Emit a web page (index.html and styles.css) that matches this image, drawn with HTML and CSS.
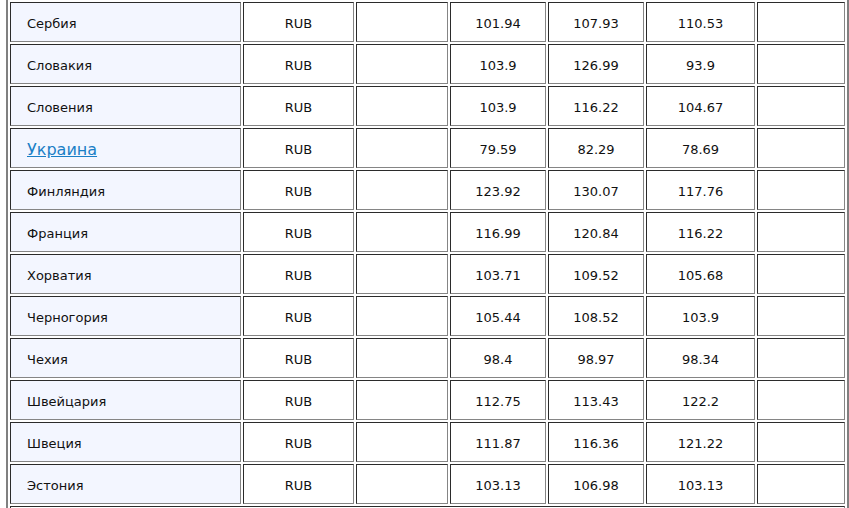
FILE: index.html
```html
<!DOCTYPE html>
<html lang="ru">
<head>
<meta charset="utf-8">
<title>Цены</title>
<link rel="stylesheet" href="styles.css">
</head>
<body>
<table class="prices">
  <colgroup>
    <col class="c-country">
    <col class="c-cur">
    <col class="c-empty">
    <col class="c-v1">
    <col class="c-v2">
    <col class="c-v3">
    <col class="c-last">
  </colgroup>
  <tbody>
    <tr><td class="country">Сербия</td><td>RUB</td><td></td><td>101.94</td><td>107.93</td><td>110.53</td><td></td></tr>
    <tr><td class="country">Словакия</td><td>RUB</td><td></td><td>103.9</td><td>126.99</td><td>93.9</td><td></td></tr>
    <tr><td class="country">Словения</td><td>RUB</td><td></td><td>103.9</td><td>116.22</td><td>104.67</td><td></td></tr>
    <tr><td class="country"><a class="link" href="#">Украина</a></td><td>RUB</td><td></td><td>79.59</td><td>82.29</td><td>78.69</td><td></td></tr>
    <tr><td class="country">Финляндия</td><td>RUB</td><td></td><td>123.92</td><td>130.07</td><td>117.76</td><td></td></tr>
    <tr><td class="country">Франция</td><td>RUB</td><td></td><td>116.99</td><td>120.84</td><td>116.22</td><td></td></tr>
    <tr><td class="country">Хорватия</td><td>RUB</td><td></td><td>103.71</td><td>109.52</td><td>105.68</td><td></td></tr>
    <tr><td class="country">Черногория</td><td>RUB</td><td></td><td>105.44</td><td>108.52</td><td>103.9</td><td></td></tr>
    <tr><td class="country">Чехия</td><td>RUB</td><td></td><td>98.4</td><td>98.97</td><td>98.34</td><td></td></tr>
    <tr><td class="country">Швейцария</td><td>RUB</td><td></td><td>112.75</td><td>113.43</td><td>122.2</td><td></td></tr>
    <tr><td class="country">Швеция</td><td>RUB</td><td></td><td>111.87</td><td>116.36</td><td>121.22</td><td></td></tr>
    <tr><td class="country">Эстония</td><td>RUB</td><td></td><td>103.13</td><td>106.98</td><td>103.13</td><td></td></tr>
    <tr><td class="footer" colspan="7"></td></tr>
  </tbody>
</table>
</body>
</html>
```
FILE: styles.css
```css
html, body {
  margin: 0;
  padding: 0;
  background: #ffffff;
}

body {
  font-family: "DejaVu Sans", Verdana, sans-serif;
  font-size: 13px;
  color: #111111;
  overflow: hidden;
}

.prices {
  margin: -2px 0 0 6px;
  width: 843px;
  table-layout: fixed;
  border-collapse: separate;
  border-spacing: 2px;
  border: 2px solid #808080;
}

.c-country { width: 231px; }
.c-cur { width: 111px; }
.c-empty { width: 92px; }
.c-v1 { width: 96px; }
.c-v2 { width: 96px; }
.c-v3 { width: 109px; }
.c-last { width: 88px; }

.prices td {
  box-sizing: border-box;
  height: 40px;
  padding: 2px 0 0 0;
  text-align: center;
  vertical-align: middle;
  border-style: solid;
  border-width: 1px;
  border-color: #2b2b2b #858585 #858585 #2b2b2b;
  white-space: nowrap;
}

.prices td.country {
  text-align: left;
  padding-left: 16px;
  background: #f3f6ff;
}

.link {
  font-size: 16px;
  color: #1a7fc6;
  text-decoration: underline;
}

.prices td.footer {
  height: 20px;
}
```
